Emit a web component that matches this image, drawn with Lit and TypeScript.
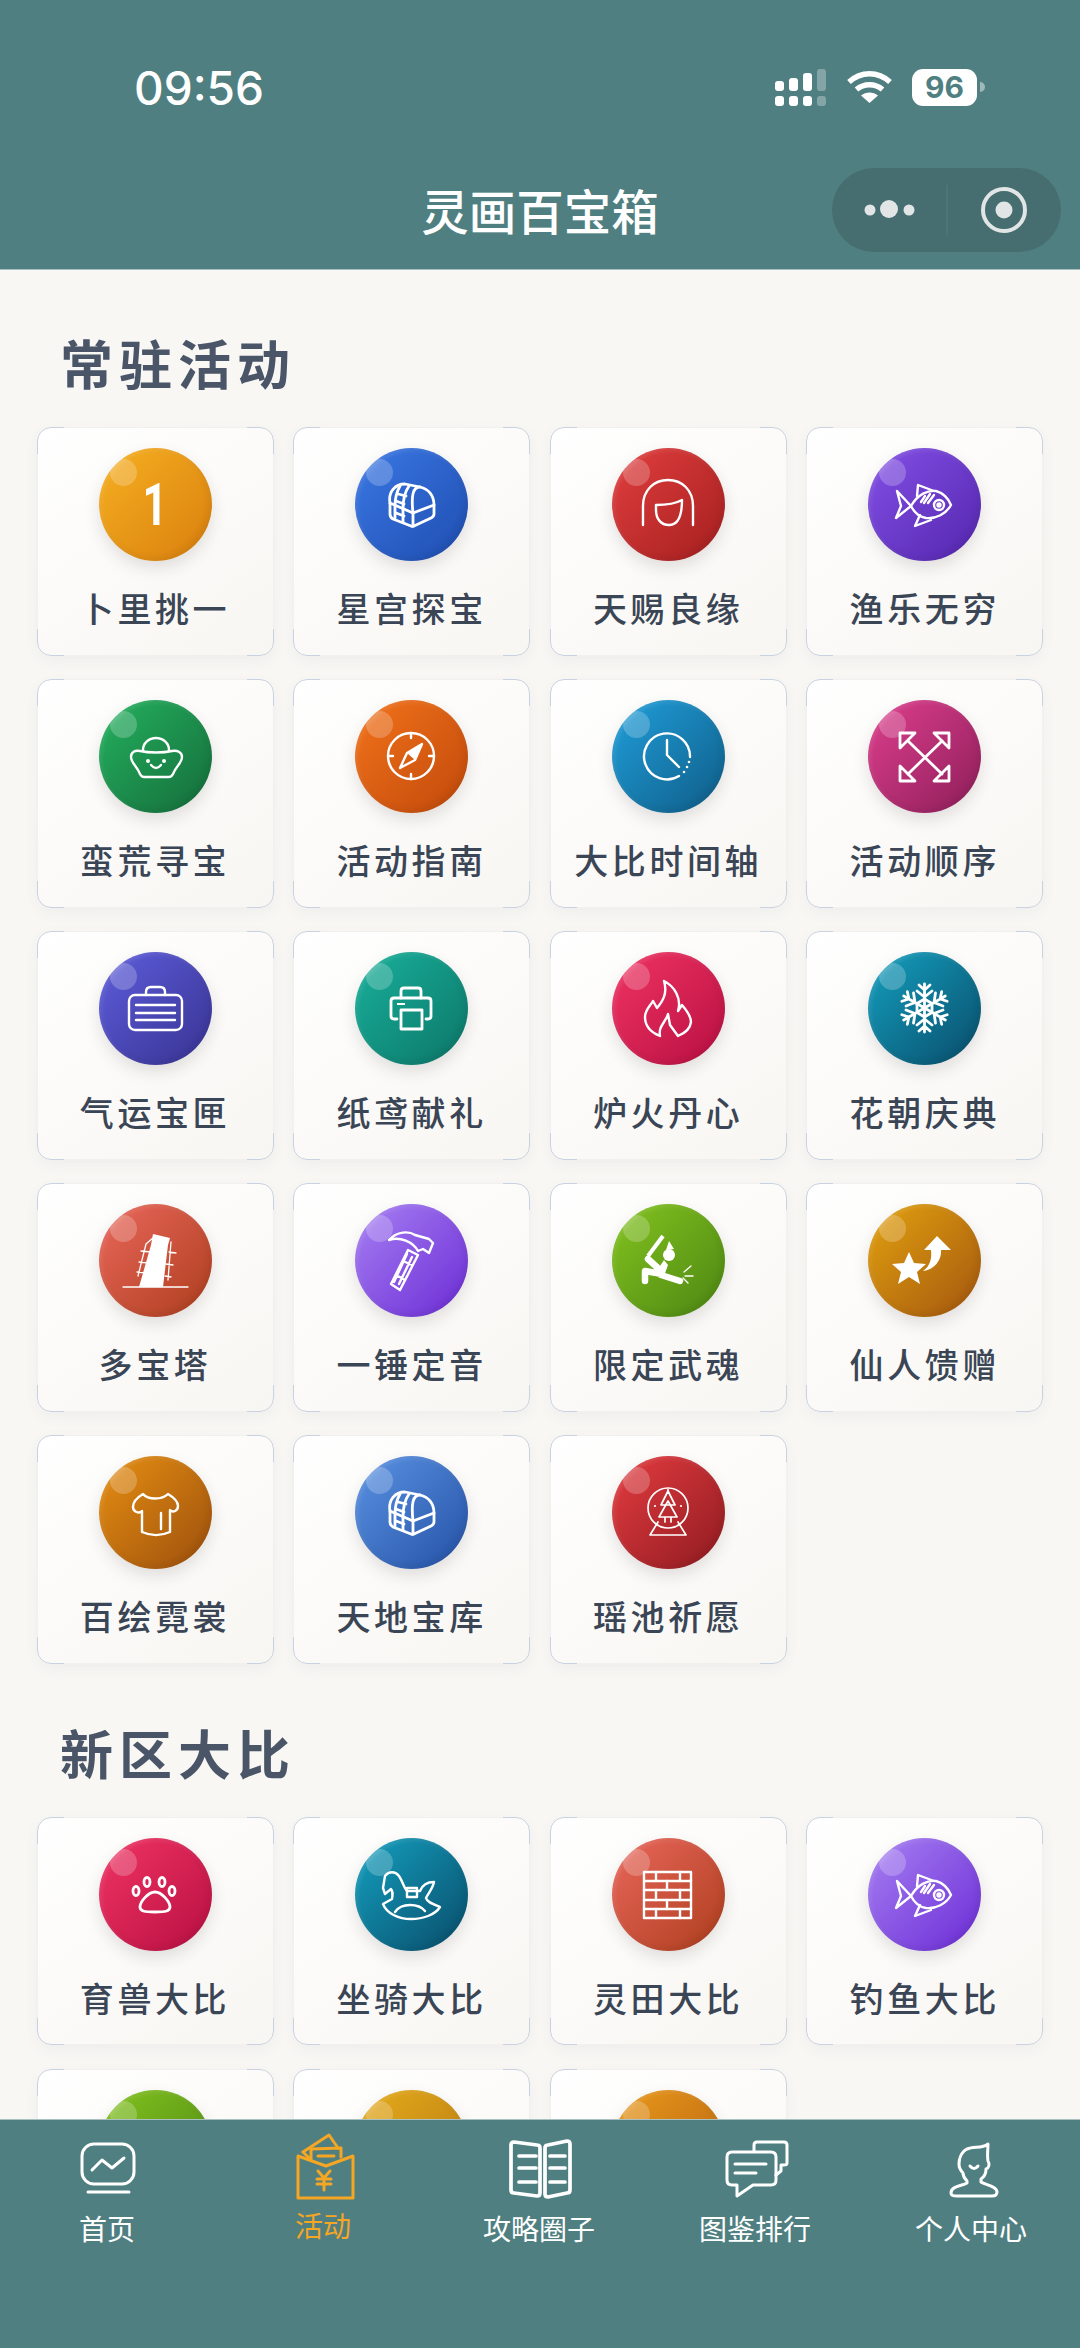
import { LitElement, html, css, svg, nothing } from "lit";
import { customElement } from "lit/decorators.js";

const chest = svg`<g class="b">
  <path d="M35 55C33 44 40 36 50 36L65 39C74 41 79 48 79 57V66C79 68 78 69 76 70L59 78C58 78.500 57 78.500 56 78L38 71C36 70 35 69 35 66Z"/>
  <path d="M35 55L58 65L79 57"/><path d="M58 65V78"/>
  <path d="M65 39C58 39 56 47 58 65"/>
  <path d="M45 38C41 45 40 52 40 58V70M54 38C49 45 48 52 48 61V74"/>
  <path d="M43 46L51 48M41 53L49 56M41 65L49 68"/></g>`;

const fish = svg`
  <path d="M43 58C50 46 60 42 68 43C75 45 80 50 83 57C78 66 68 71 58 70C51 69 46 64 43 58Z"/>
  <path d="M43 58L29 43L33 58L28 70Z"/>
  <path d="M49 48L50 37L66 43"/><path d="M52 67L47 78L63 72"/>
  <circle cx="71" cy="57" r="5"/><circle cx="71" cy="57" r="1.500"/>
  <path d="M57 48L53 54M62 46L56 55M66 47L60 55"/>`;

const flake = svg`<path class="b" d="M56.500 56V32M56.500 38L51 33M56.500 38L62 33M56.500 45L49 39M56.500 45L64 39"/>`;

const ICONS: Record<string, unknown> = {
  one: svg`<text class="one" transform="translate(56 77) scale(.72 1)" text-anchor="middle">1</text>`,
  chest,
  face: svg`
    <path d="M31 77V58C31 42 42 32 56 32C70 32 81 42 81 58V77"/>
    <path d="M44 57C54 57 63 56 70 52C70 66 67 77 57 77C49 77 44 71 44 62Z"/>`,
  fish,
  ingot: svg`
    <path d="M44 50C44 43 50 38 57 38C64 38 70 43 70 50"/>
    <path d="M32 57C32 52 36 50 41 51C50 53 64 53 73 51C78 50 83 52 83 57C83 63 77 66 74 74C73 76 72 77 70 77H45C43 77 42 76 41 74C38 66 32 63 32 57Z"/>
    <circle class="f" cx="49" cy="61" r="2"/><circle class="f" cx="65" cy="61" r="2"/>
    <path d="M52 65Q57 71 62 65"/>`,
  compass: svg`
    <circle cx="56" cy="56" r="23"/>
    <path d="M56 33V38M56 74V79M33 56H38M74 56H79"/>
    <path d="M67 44L60 60L45 68L52 53Z"/><path class="f" d="M67 44L60 60L52 53Z"/>`,
  clock: svg`
    <path d="M67 76A23 23 0 1 1 78 57"/>
    <path d="M55 40V55L67 67"/>
    <circle class="f" cx="77" cy="62" r="1.300"/><circle class="f" cx="75" cy="67" r="1.300"/><circle class="f" cx="72" cy="72" r="1.300"/>`,
  expand: svg`<g class="b">
    <path d="M40 41L74 74M74 41L40 74"/>
    <path d="M32 33H47L32 48ZM81 33H66L81 48ZM32 81H47L32 66ZM81 81H66L81 66Z"/></g>`,
  brief: svg`
    <rect x="30" y="43" width="53" height="35" rx="6"/>
    <path d="M47 43V40Q47 35 52 35H61Q66 35 66 40V43"/>
    <path d="M37 53H76M37 61H76M37 68H76"/>`,
  printer: svg`
    <path class="b" d="M46 46V39Q46 36 49 36H63Q66 36 66 39V46"/>
    <path class="b" d="M42 67H39Q36 67 36 64V49Q36 46 39 46H73Q76 46 76 49V64Q76 67 73 67H71"/>
    <rect class="b" x="46" y="58" width="21" height="19"/>
    <rect class="f" x="42" y="51" width="8" height="2"/>`,
  flame: svg`
    <path d="M48 84C38 80 33 73 33 65C33 58 38 54 41 49L45 56C50 50 56 42 52 29C62 34 70 46 66 59L70 53C76 60 79 66 79 70C78 78 71 82 66 84L58 73L56 62C54 70 46 74 48 84Z"/>`,
  snow: svg`
    ${[0, 60, 120, 180, 240, 300].map((a) => svg`<g transform="rotate(${a} 56.500 56)">${flake}</g>`)}
    <path class="b" d="M56.500 47L64 51.500V60.500L56.500 65L49 60.500V51.500Z"/>`,
  tower: svg`
    <path class="f s0" d="M54 30L71 34L69 41L64 83H40L52 41Z"/>
    <path class="t" d="M24 83H89"/>
    <path class="t" d="M47 40L55 33M47 40L39 72M72 38L69 76M42 47L52 48M70 48L77 49M40 58L50 59M67 60L74 61M38 68L48 69M66 72L72 73"/>`,
  hammer: svg`
    <path d="M53 46L36 80L45 86L63 51Z"/>
    <path d="M34 36C42 27 54 27 60 31L74 35L78 39L74 49L68 45L63 47C58 38 45 32 34 36Z"/>
    <path d="M48 57L57 61M41 71L50 76M52 50L39 78M57 53L44 80"/>`,
  swing: svg`
    <path class="b3" d="M51 32L36 52"/>
    <circle class="f s0" cx="57" cy="51" r="6"/>
    <path class="f s0" d="M54 46L57 37L62 45Z"/>
    <path class="f s0" d="M52 56L56 61L52 72L42 70L48 62Z"/>
    <path class="b4" d="M36 55L47 65M50 70L33 67L33 77M49 71L68 77"/>
    <path class="t" d="M72 68L79 62M73 72H81M71 74L76 79"/>`,
  star: svg`
    <path class="f s0" d="M41 48L46 59L58 60L49 68L52 80L41 73L30 80L33 68L24 60L36 59Z"/>
    <path class="f s0" d="M55 67C62 62 64 55 63 46H56L69 32L83 46H73C74 56 66 66 55 67Z"/>`,
  shirt: svg`
    <path d="M44 38C49 44 63 44 69 38C74 41 79 46 79 50C79 55 74 57 71 54V76C62 80 52 80 43 76V55C40 58 34 56 34 51C34 45 39 41 44 38Z"/>
    <path d="M62 57V73"/>`,
  globe: svg`<g class="g">
    <circle cx="56" cy="52" r="20"/>
    <path d="M46 66L38 79H74L66 66"/>
    <path d="M56 35L49 49H63ZM56 45L47 61H65ZM53 61V66M59 61V66"/>
    <circle class="f" cx="43" cy="50" r="1.100"/><circle class="f" cx="69" cy="50" r="1.100"/><circle class="f" cx="56" cy="34" r="1.100"/></g>`,
  paw: svg`<g class="b">
    <path d="M56 54C63 54 71 64 71 69C71 73 67 74 56 74C45 74 41 73 41 69C41 64 49 54 56 54Z"/>
    <ellipse cx="37" cy="53" rx="3" ry="4.500"/><ellipse cx="48" cy="44" rx="3" ry="4.500"/>
    <ellipse cx="63" cy="44" rx="3" ry="4.500"/><ellipse cx="73" cy="53" rx="3" ry="4.500"/></g>`,
  horse: svg`
    <path d="M30 38C34 33 40 33 44 38C48 44 49 50 52 53H65C67 48 72 44 79 44C78 50 74 54 71 60C72 64 78 66 85 69C80 77 68 81 56 81C44 81 32 76 28 66L37 61C38 56 37 52 36 51L30 56L28 50Z"/>
    <path d="M40 74C44 68 50 67 55 67C61 67 66 68 70 73"/>
    <rect x="52" y="50" width="10" height="9"/>`,
  brick: svg`
    <rect x="32" y="34" width="47" height="46"/>
    <path d="M32 43H79M32 52H79M32 62H79M32 71H79"/>
    <path d="M44 34V43M68 34V43M55 43V52M44 52V62M68 52V62M55 62V71M44 71V80M68 71V80"/>`,
  none: nothing,
};

type Tile = { label: string; icon: string; from: string; to: string };
const t = (label: string, icon: string, from: string, to: string): Tile => ({ label, icon, from, to });

const SECTIONS: { title: string; items: Tile[] }[] = [
  {
    title: "常驻活动",
    items: [
      t("卜里挑一", "one", "#f6b021", "#d97f0e"),
      t("星宫探宝", "chest", "#3a78e4", "#1f4db0"),
      t("天赐良缘", "face", "#e23e3e", "#a41f1f"),
      t("渔乐无穷", "fish", "#8350e6", "#5426ae"),
      t("蛮荒寻宝", "ingot", "#24b15f", "#156c3a"),
      t("活动指南", "compass", "#f2731b", "#c1490b"),
      t("大比时间轴", "clock", "#209fdb", "#0f5c86"),
      t("活动顺序", "expand", "#de3f8d", "#8d1e5a"),
      t("气运宝匣", "brief", "#5d5ddb", "#383392"),
      t("纸鸢献礼", "printer", "#18b09b", "#0d7668"),
      t("炉火丹心", "flame", "#f03463", "#b80f42"),
      t("花朝庆典", "snow", "#14a0bf", "#094c6a"),
      t("多宝塔", "tower", "#ea675c", "#ad3e1d"),
      t("一锤定音", "hammer", "#a680f2", "#6c2cd6"),
      t("限定武魂", "swing", "#84c31f", "#4c8613"),
      t("仙人馈赠", "star", "#e2a20f", "#a4560f"),
      t("百绘霓裳", "shirt", "#e68f12", "#9c4f0d"),
      t("天地宝库", "chest", "#5b93e3", "#2451a5"),
      t("瑶池祈愿", "globe", "#e43c40", "#8f1b20"),
    ],
  },
  {
    title: "新区大比",
    items: [
      t("育兽大比", "paw", "#f03463", "#b80f42"),
      t("坐骑大比", "horse", "#14a0bf", "#094c6a"),
      t("灵田大比", "brick", "#ea675c", "#ad3e1d"),
      t("钓鱼大比", "fish", "#a680f2", "#6c2cd6"),
      t("", "none", "#84c31f", "#4c8613"),
      t("", "none", "#e6ad1c", "#b5760f"),
      t("", "none", "#ea9a1c", "#b5600f"),
    ],
  },
];

const TABS = [
  {
    label: "首页",
    icon: svg`<rect x="14" y="11" width="52" height="40" rx="12"/><path d="M24 37L34 27L44 35L56 25"/><path d="M20 59H61"/>`,
  },
  {
    label: "活动",
    active: true,
    icon: svg`
      <path d="M14 23V65H69V23L42 33L14 23"/>
      <path d="M19 19L45 2L54 15"/>
      <path d="M19 19L27 27V16L57 15V24"/>
      <path d="M34 23H50"/>
      <path d="M34 38L40 45L46 38M40 45V57M33 46H47M33 51H47"/>`,
  },
  {
    label: "攻略圈子",
    icon: svg`<g class="th">
      <path d="M14 9L37 12Q40 12 40 15V60Q40 63 37 63L14 60Q11 60 11 57V12Q11 9 14 9Z"/>
      <path d="M67 8L48 12Q45 12 45 15V61Q45 64 48 64L67 60Q70 60 70 57V11Q70 8 67 8Z"/>
      <path d="M19 23H36M19 35H36M19 49H36M50 23H65M50 35H65M50 49H65"/></g>`,
  },
  {
    label: "图鉴排行",
    icon: svg`
      <path d="M16 19H55Q60 19 60 24V47Q60 52 55 52H37L21 63V52H16Q11 52 11 47V24Q11 19 16 19Z"/>
      <path d="M38 18V12Q38 9 41 9H68Q71 9 71 12V30Q71 32 68 32H65V38L60 42"/>
      <path d="M19 31H50M19 40H40"/>`,
  },
  {
    label: "个人中心",
    icon: svg`
      <path d="M56 11C50 16 42 13 35 16C29 19 27 26 27 31C27 36 30 39 31 40C31 44 33 46 35 48V50C30 53 19 53 19 60C19 63 22 63 25 63H60C63 63 65 62 65 59C65 53 53 52 49 49V46C52 44 54 40 54 36C57 35 58 31 56 28C55 22 56 16 56 11Z"/>
      <path d="M38 33Q42 38 46 33"/>`,
  },
];

@customElement("app-root")
export class AppRoot extends LitElement {
  static styles = css`
    :host {
      display: block;
      width: 1080px;
      height: 2348px;
      font-family: "Noto Sans CJK SC", "Noto Sans", sans-serif;
    }
    .page { display: flex; flex-direction: column; width: 1080px; height: 2348px; overflow: hidden; background: #f8f7f4; }

    .top { flex: none; height: 270px; background: #507f81; border-bottom: 1px solid #a9bfc0; box-sizing: border-box; color: #fff; }
    .status { height: 168px; display: flex; align-items: flex-start; padding: 61px 95px 0 134px; box-sizing: border-box; }
    .time { font: 500 46px/54px Inter, "Noto Sans", sans-serif; }
    .sys { margin-left: auto; display: flex; align-items: flex-start; padding-top: 8px; }
    .sys svg { display: block; }
    .sig { margin-right: 21px; }
    .wifi { margin-right: 20px; }
    .bat { width: 65px; height: 37px; border-radius: 11px; background: #fff; color: #507f81; font: 700 30px/37px Inter, sans-serif; text-align: center; }
    .cap { margin: 13px 0 0 3px; width: 5px; height: 10px; border-radius: 0 5px 5px 0; background: rgba(255, 255, 255, 0.45); }
    .nav { display: grid; grid-template-columns: 1fr auto 1fr; align-items: center; height: 84px; }
    .title { font-size: 47.500px; font-weight: 500; line-height: 82px; }
    .pill { justify-self: end; margin-right: 19px; width: 229px; height: 84px; border-radius: 42px; background: #466d6f; display: flex; align-items: center; }
    .pill svg { display: block; }

    main { flex: 1; min-height: 0; overflow: hidden; padding-top: 62px; display: flex; flex-direction: column; gap: 58px; }
    h2 { margin: 0 0 35px 60px; font-size: 53px; line-height: 60px; font-weight: 700; letter-spacing: 6px; color: #4a5568; }
    .grid { display: grid; grid-template-columns: repeat(4, 237px); gap: 23.500px 19.6px; padding-left: 36.5px; }
    .card {
      position: relative; height: 228.500px; box-sizing: border-box; padding-top: 20px;
      display: flex; flex-direction: column; align-items: center;
      border-radius: 14px; border: 1px solid #f1f0ee;
      background: linear-gradient(145deg, #ffffff, #f8f6f2);
      box-shadow: 0 5px 14px rgba(60, 70, 90, 0.05);
    }
    .card::before {
      content: ""; position: absolute; inset: -1px; border-radius: 14px; border: 1.5px solid #c9d2e0;
      -webkit-mask:
        linear-gradient(#000 0 0) 0 0 / 27px 27px no-repeat,
        linear-gradient(#000 0 0) 100% 0 / 27px 27px no-repeat,
        linear-gradient(#000 0 0) 0 100% / 27px 27px no-repeat,
        linear-gradient(#000 0 0) 100% 100% / 27px 27px no-repeat;
      mask:
        linear-gradient(#000 0 0) 0 0 / 27px 27px no-repeat,
        linear-gradient(#000 0 0) 100% 0 / 27px 27px no-repeat,
        linear-gradient(#000 0 0) 0 100% / 27px 27px no-repeat,
        linear-gradient(#000 0 0) 100% 100% / 27px 27px no-repeat;
      pointer-events: none;
    }
    .ball {
      position: relative; flex: none; width: 113px; height: 113px; border-radius: 50%;
      box-shadow: 0 7px 16px rgba(40, 40, 40, 0.13), inset -3px -3px 7px rgba(0, 0, 0, 0.07), inset 2px 2px 5px rgba(255, 255, 255, 0.12);
    }
    .ball::before { content: ""; position: absolute; left: 11px; top: 11px; width: 27px; height: 27px; border-radius: 50%; background: rgba(255, 255, 255, 0.22); }
    .ball svg { position: relative; display: block; width: 113px; height: 113px; fill: none; stroke: #fff; stroke-width: 2.4; stroke-linecap: round; stroke-linejoin: round; }
    .ball .f { fill: #fff; stroke: none; }
    .ball .s0 { stroke: none; }
    .ball .b { stroke-width: 2.8; }
    .ball .g { stroke-width: 1.7; }
    .ball .b3 { stroke-width: 4; stroke-linecap: butt; }
    .ball .b4 { stroke-width: 6.5; }
    .ball .t { stroke-width: 1.300; }
    .one { fill: #fff; stroke: none; font: 700 60px Roboto, sans-serif; }
    .label { margin-top: 23px; font-size: 34px; line-height: 48px; font-weight: 500; letter-spacing: 3.6px; color: #3a4555; white-space: nowrap; }

    .tabs { flex: none; height: 229px; box-sizing: border-box; background: #507f81; border-top: 1px solid #a9bfc0; display: grid; grid-template-columns: repeat(5, 216px); padding-top: 13px; align-items: start; }
    .tab { display: flex; flex-direction: column; align-items: center; color: #fff; }
    .tab svg { display: block; width: 80px; height: 72px; fill: none; stroke: currentColor; stroke-width: 3; stroke-linecap: round; stroke-linejoin: round; }
    .tab .th { stroke-width: 3.700; }
    .tab span { margin: 3px 2px 0 0; font-size: 28px; line-height: 40px; }
    .tab.on { color: #f5a623; }
    .tab.on span { margin-top: 0; }
  `;

  private statusIcons() {
    return html`
      <svg class="sig" width="51" height="37" viewBox="0 0 51 37" fill="#fff">
        <rect x="0" y="12" width="9" height="10" rx="3"/><rect x="14" y="9" width="9" height="13" rx="3"/><rect x="28" y="4" width="9" height="18" rx="3"/>
        <rect x="42" y="0" width="9" height="22" rx="3" opacity=".3"/>
        <rect x="0" y="27" width="9" height="10" rx="3"/><rect x="14" y="27" width="9" height="10" rx="3"/><rect x="28" y="27" width="9" height="10" rx="3"/>
        <rect x="42" y="27" width="9" height="10" rx="3" opacity=".3"/>
      </svg>
      <svg class="wifi" width="45" height="35" viewBox="0 0 45 35" fill="none" stroke="#fff" stroke-width="5.500">
        <path d="M2 13C14 2 31 2 43 13"/><path d="M9.500 20.500C17 14 28 14 35.500 20.500"/>
        <path d="M22.500 34L14 26.500C19 22.500 26 22.500 31 26.500Z" fill="#fff" stroke="none"/>
      </svg>
      <div class="bat">96</div>
      <div class="cap"></div>
    `;
  }

  render() {
    return html`
      <div class="page">
        <header class="top">
          <div class="status">
            <div class="time">09:56</div>
            <div class="sys">${this.statusIcons()}</div>
          </div>
          <div class="nav">
            <div></div>
            <div class="title">灵画百宝箱</div>
            <div class="pill">
              <svg width="229" height="84" viewBox="0 0 229 84">
                <circle cx="38" cy="42" r="5.500" fill="#e1e5e5"/><circle cx="57" cy="41" r="9" fill="#e1e5e5"/><circle cx="77" cy="42" r="5.500" fill="#e1e5e5"/>
                <path d="M115 17V67" stroke="#fff" stroke-opacity=".1" stroke-width="1"/>
                <circle cx="172" cy="42" r="21" fill="none" stroke="#e1e5e5" stroke-width="4"/><circle cx="172" cy="42" r="8.500" fill="#e1e5e5"/>
              </svg>
            </div>
          </div>
        </header>
        <main>
          ${SECTIONS.map(
            (s) => html`
              <section>
                <h2>${s.title}</h2>
                <div class="grid">
                  ${s.items.map(
                    (i) => html`
                      <div class="card">
                        <div class="ball" style="background:linear-gradient(135deg,${i.from},${i.to})">
                          <svg viewBox="0 0 113 113">${ICONS[i.icon]}</svg>
                        </div>
                        <div class="label">${i.label}</div>
                      </div>
                    `,
                  )}
                </div>
              </section>
            `,
          )}
        </main>
        <nav class="tabs">
          ${TABS.map(
            (b) => html`
              <div class="tab ${b.active ? "on" : ""}">
                <svg viewBox="0 0 80 72">${b.icon}</svg>
                <span>${b.label}</span>
              </div>
            `,
          )}
        </nav>
      </div>
    `;
  }
}
